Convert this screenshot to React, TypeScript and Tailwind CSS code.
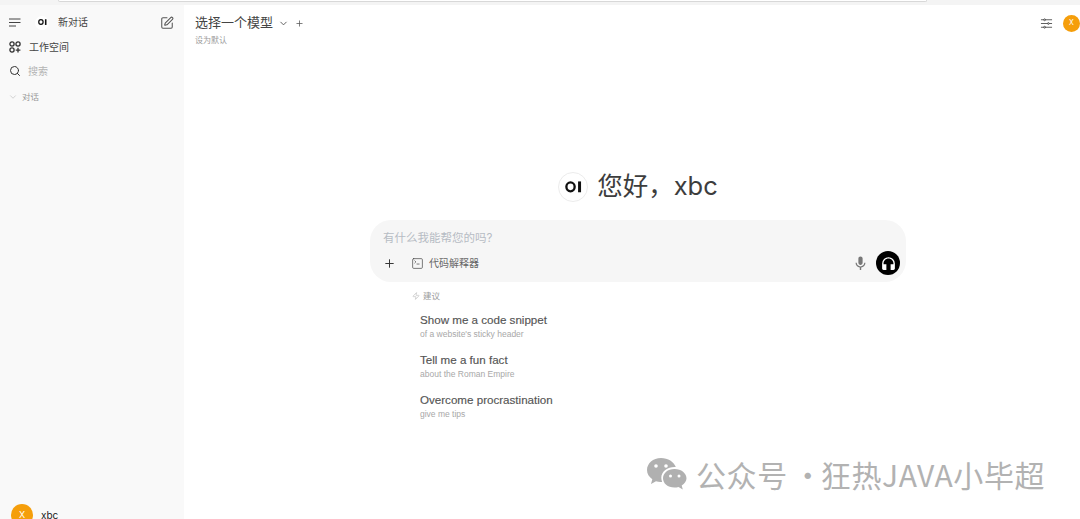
import { ChevronDown, Plus, Search, SquarePen, SquareTerminal, Zap } from "lucide-react";
import { MdHeadphones, MdMic } from "react-icons/md";
import { HiOutlineAdjustmentsHorizontal } from "react-icons/hi2";

const cjk = "font-['Inter','Noto_Sans_CJK_SC',sans-serif]";

function Logo({ className, mark }: { className: string; mark: string }) {
  return (
    <div className={className}>
      <svg viewBox="0 0 16 11" className={mark} fill="none">
        <ellipse cx="5.200" cy="5.500" rx="3.900" ry="4.200" stroke="#111" strokeWidth="2.200" />
        <rect x="12.300" y="0.400" width="2.800" height="10.200" fill="#111" />
      </svg>
    </div>
  );
}

function Suggestion({ title, sub }: { title: string; sub: string }) {
  return (
    <div className="h-10 pt-[5px] font-['Liberation_Sans',sans-serif]">
      <div className="text-[11.600px] leading-[16px] text-[#555555] [-webkit-text-stroke:0.15px_#555555]">{title}</div>
      <div className="text-[8.500px] leading-[12px] text-[#a8a8a8]">{sub}</div>
    </div>
  );
}

export default function App() {
  return (
    <div className={`relative h-[519px] w-[1080px] overflow-hidden bg-white flex flex-col ${cjk}`}>
      <div className="h-[5px] shrink-0 bg-[#f4f4f4] pl-[58px] pr-[153px]">
        <div className="h-[2px] rounded-b bg-white border-b border-x border-[#d8d8d8]" />
      </div>
      <div className="flex flex-1 min-h-0">
        <aside className="w-[184px] shrink-0 bg-[#f9f9f9] flex flex-col px-[8px] overflow-hidden">
          <div className="flex items-center h-[34px] pt-[1px]">
            <svg viewBox="0 0 12 9" className="w-[12px] h-[9px] ml-[1px]" fill="none" stroke="#444" strokeWidth="1">
              <path d="M0 1h11.500M0 4.500h11.500M0 8h7" />
            </svg>
            <Logo className="ml-[14px] w-[14px] h-[14px] rounded-full bg-white flex items-center justify-center" mark="w-[9px]" />
            <span className="ml-[9px] text-[10px] text-[#444]">新对话</span>
            <SquarePen size={14} strokeWidth={1.800} className="ml-auto mr-[2px] text-[#555]" />
          </div>
          <div className="flex items-center h-[22px] mt-[-3px] gap-[8px]">
            <svg viewBox="0 0 12 12" className="w-[12px] h-[12px] ml-[1px]" fill="none" stroke="#333" strokeWidth="1.300">
              <circle cx="3" cy="3" r="2.100" />
              <circle cx="9" cy="3" r="2.100" />
              <circle cx="3" cy="9" r="2.100" />
              <path d="M9 6.800v4.700M6.700 9.200h4.700" />
            </svg>
            <span className="text-[10px] text-[#444]">工作空间</span>
          </div>
          <div className="flex items-center h-[26px] gap-[7px]">
            <Search size={12} strokeWidth={2} className="text-[#333] ml-[1px]" />
            <span className="text-[10px] text-[#b4b4b4]">搜索</span>
          </div>
          <div className="flex items-center h-[24px] gap-[4px] mt-[1px]">
            <ChevronDown size={10} strokeWidth={1.200} className="text-[#aaa]" />
            <span className="text-[8.500px] text-[#999]">对话</span>
          </div>
          <div className="mt-auto flex items-center gap-[8px] h-[26px] translate-y-[9px] ml-[3px]">
            <div className="w-[22px] h-[22px] rounded-full bg-[#f59e0b] text-white text-[9px] flex items-center justify-center">X</div>
            <span className="text-[10px] text-[#222]">xbc</span>
          </div>
        </aside>

        <main className="flex-1 min-w-0 flex flex-col">
          <header className="flex justify-between pl-[11px] h-[42px] shrink-0">
            <div className="pt-[9px]">
              <div className="flex items-center h-[18px]">
                <span className="text-[13px] text-[#444]">选择一个模型</span>
                <ChevronDown size={11} className="ml-[5px] text-[#555]" />
                <Plus size={9} className="ml-[6px] text-[#555]" />
              </div>
              <div className="text-[8px] leading-[10px] mt-[3px] text-[#9a9a9a]">设为默认</div>
            </div>
            <div className="flex items-start pt-[10px]">
              <HiOutlineAdjustmentsHorizontal size={15} className="text-[#555] mt-[1px]" />
              <div className="ml-[9px] w-[17px] h-[17px] rounded-full bg-[#f59e0b] text-white text-[7px] flex items-center justify-center">X</div>
            </div>
          </header>

          <div className="flex-1 min-h-0 flex">
            <div className="w-[186px] shrink-0" />
            <div className="w-[536px] shrink-0 pt-[122px]">
              <div className="flex items-center justify-center h-[36px] -translate-y-[1px]">
                <Logo className="w-[30px] h-[30px] rounded-full bg-white border border-[#ececec] flex items-center justify-center translate-y-[1px]" mark="w-[17px]" />
                <span className="ml-[9px] text-[25.500px] text-[#3d3d3d]">您好，xbc</span>
              </div>
              <div className="mt-[15px] h-[62px] rounded-[21px] bg-[#f6f6f6] flex flex-col">
                <div className="pl-[13px] pt-[10px] text-[11.500px] leading-[16px] text-[#b6bcc4]">有什么我能帮您的吗?</div>
                <div className="flex items-center mt-[5px] pl-[13px] pr-[6px] h-[24px]">
                  <Plus size={13} strokeWidth={1.800} className="text-[#333]" />
                  <SquareTerminal size={13} strokeWidth={1.300} className="ml-[15px] text-[#444]" />
                  <span className="ml-[5px] text-[10px] text-[#666]">代码解释器</span>
                  <MdMic size={17} className="ml-auto text-[#777]" />
                  <div className="ml-[7px] w-[24px] h-[24px] rounded-full bg-black flex items-center justify-center">
                    <MdHeadphones size={17} className="text-white" />
                  </div>
                </div>
              </div>
              <div className="mt-[7px] pl-[42px] flex items-center gap-[3px] h-[14px]">
                <Zap size={8} strokeWidth={1.500} className="text-[#aaa]" />
                <span className="text-[8.500px] text-[#999]">建议</span>
              </div>
              <div className="pl-[50px] mt-[4px]">
                <Suggestion title="Show me a code snippet" sub="of a website's sticky header" />
                <Suggestion title="Tell me a fun fact" sub="about the Roman Empire" />
                <Suggestion title="Overcome procrastination" sub="give me tips" />
              </div>
            </div>
            <div className="flex-1" />
          </div>
        </main>
      </div>
      <div className="absolute left-[646px] top-[456px] flex items-center h-[36px] text-[#b2b2b2] text-[30px] leading-none font-['Noto_Sans_CJK_SC',sans-serif] whitespace-nowrap tracking-[0.600px]">
        <svg viewBox="0 0 42 35" className="w-[42px] h-[35px]" fill="#b0b0b0">
          <path d="M15 1C7 1 1 6.500 1 13c0 3.800 2 7 5.300 9.200L5 27l5-2.700c1.500.4 3 .7 4.600.7h1.500c-.5-1.400-.8-2.800-.8-4.200C15.300 14.500 21.500 10 28.600 10c.4 0 .8 0 1.200.1C28 4.800 22 1 15 1z" />
          <path d="M28.500 12C21.600 12 17 16.300 17 21.300S21.600 30.600 28.500 30.600c1.400 0 2.700-.2 4-.6l4.300 2.400-1.100-4c2.900-1.800 4.800-4.300 4.800-7.100C40.500 16.300 35.400 12 28.500 12z" />
          <circle cx="10" cy="9" r="1.800" fill="#fff" />
          <circle cx="20" cy="9" r="1.800" fill="#fff" />
          <circle cx="24.500" cy="19" r="1.500" fill="#fff" />
          <circle cx="33" cy="19" r="1.500" fill="#fff" />
        </svg>
        <span className="ml-[8px]">公众号</span>
        <span className="ml-[5px] w-[28px] text-center">·</span>
        <span>狂热JAVA小毕超</span>
      </div>
    </div>
  );
}
